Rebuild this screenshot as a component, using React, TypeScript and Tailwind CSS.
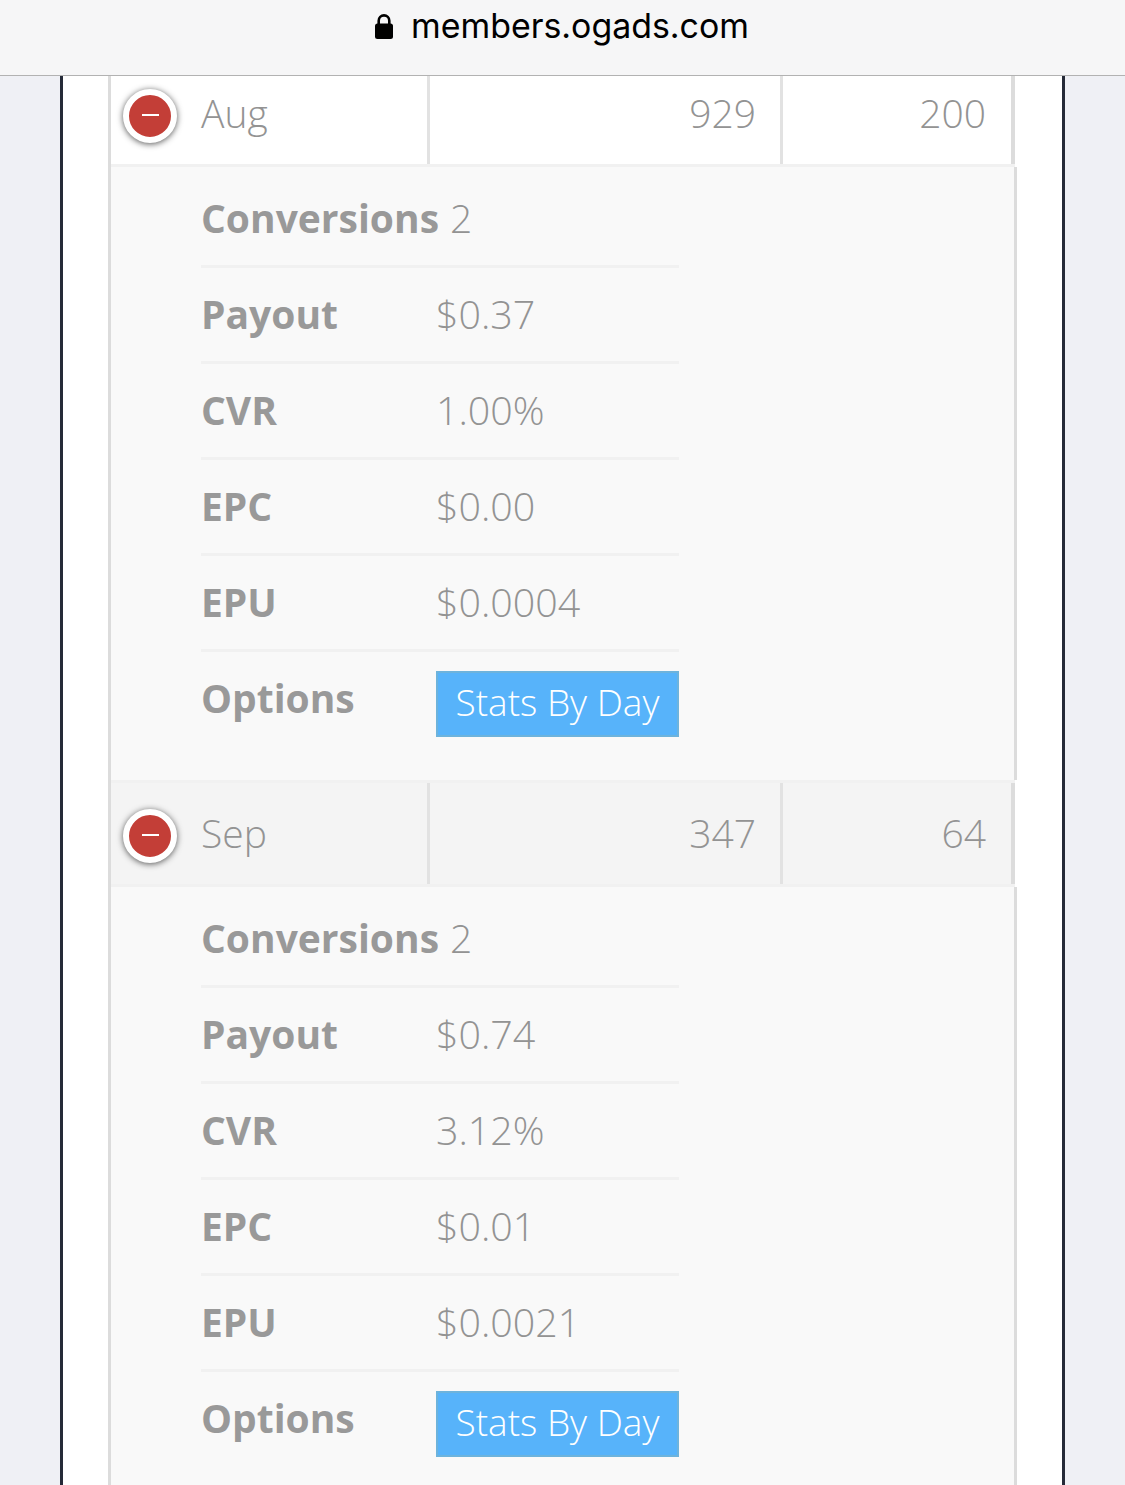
const font = { fontFamily: '"Open Sans", "Liberation Sans", sans-serif' }

function LockIcon() {
    return (
        <svg width="18" height="25" viewBox="0 0 18 25" className="block">
            <path d="M3.7 11V6.7a5.3 5.3 0 0 1 10.6 0V11" fill="none" stroke="#000" strokeWidth="2.6" />
            <rect x="0" y="9.5" width="18" height="15.5" rx="2.5" fill="#000" />
        </svg>
    )
}

function ToggleButton() {
    return (
        <div className="mt-[4px] flex h-[54px] w-[54px] shrink-0 items-center justify-center rounded-full border-[6px] border-white bg-[#c33e37] shadow-[0_1px_6px_#555]">
            <div className="mb-[2px] h-[2px] w-[17px] bg-white"></div>
        </div>
    )
}

function MonthRow({ month, clicks, unique, shaded }: { month: string; clicks: string; unique: string; shaded?: boolean }) {
    return (
        <div className={`flex h-[107px] w-[904px] border-y-[3px] border-[#f1f1f1] text-[39px] leading-none font-light text-[#939393] ${shaded ? 'bg-[#f4f4f4]' : 'bg-white'}`}>
            <div className="flex w-[319px] items-center gap-[24px] border-r-[3px] border-[#e2e2e2] pl-[12px]">
                <ToggleButton />
                <span className="mb-[2px]">{month}</span>
            </div>
            <div className="flex w-[353px] items-center justify-end border-r-[3px] border-[#e2e2e2] pr-[24px] pb-[2px]">{clicks}</div>
            <div className="flex w-[232px] items-center justify-end border-r-[4px] border-[#dcdcdc] pr-[25px] pb-[2px]">{unique}</div>
        </div>
    )
}

function StatLine({ label, value }: { label: string; value: string }) {
    return (
        <div className="flex h-[96px] items-center border-b-[3px] border-[#f1f1f1] pb-[2px]">
            <span className="w-[235px] font-bold">{label}</span>
            <span className="mt-[2px] text-[39.4px] font-light text-[#939393]">{value}</span>
        </div>
    )
}

function Details({ stats }: { stats: { conversions: string; payout: string; cvr: string; epc: string; epu: string } }) {
    return (
        <div className="h-[613px] w-[906px] border-r-[3px] border-[#dcdcdc] bg-[#f9f9f9] pt-[5px] pl-[90px] text-[39px] leading-none text-[#999]">
            <div className="w-[478px]">
                <div className="flex h-[96px] items-center gap-[11px] border-b-[3px] border-[#f1f1f1] pb-[2px]">
                    <span className="font-bold">Conversions</span>
                    <span className="font-light text-[#939393]">{stats.conversions}</span>
                </div>
                <StatLine label="Payout" value={stats.payout} />
                <StatLine label="CVR" value={stats.cvr} />
                <StatLine label="EPC" value={stats.epc} />
                <StatLine label="EPU" value={stats.epu} />
                <div className="flex items-start pt-[19px]">
                    <span className="mt-[7px] w-[235px] font-bold">Options</span>
                    <button className="flex h-[66px] w-[243px] items-center justify-center border-[2px] border-[#6db3dc] bg-[#57b3fa] pb-[6px] text-[37px] font-light text-white">
                        Stats By Day
                    </button>
                </div>
            </div>
        </div>
    )
}

export default function App() {
    return (
        <div className="h-[1485px] overflow-hidden bg-[#eff0f5]" style={font}>
            <div className="relative z-10 flex h-[76px] items-center justify-center gap-[18px] border-b border-[#b2b2b2] bg-[#f6f6f7] pb-[23px] pr-[1px]">
                <LockIcon />
                <span className="text-[33.9px] leading-none text-black" style={{ fontFamily: 'Inter, sans-serif' }}>members.ogads.com</span>
            </div>
            <div className="ml-[60px] h-[1409px] w-[1005px] overflow-hidden border-x-[3px] border-[#252a38] bg-white pl-[45px]">
                <div className="-mt-[16px] w-[909px] border-l-[3px] border-[#dcdcdc]">
                    <MonthRow month="Aug" clicks="929" unique="200" />
                    <Details stats={{ conversions: '2', payout: '$0.37', cvr: '1.00%', epc: '$0.00', epu: '$0.0004' }} />
                    <MonthRow month="Sep" clicks="347" unique="64" shaded />
                    <Details stats={{ conversions: '2', payout: '$0.74', cvr: '3.12%', epc: '$0.01', epu: '$0.0021' }} />
                </div>
            </div>
        </div>
    )
}
